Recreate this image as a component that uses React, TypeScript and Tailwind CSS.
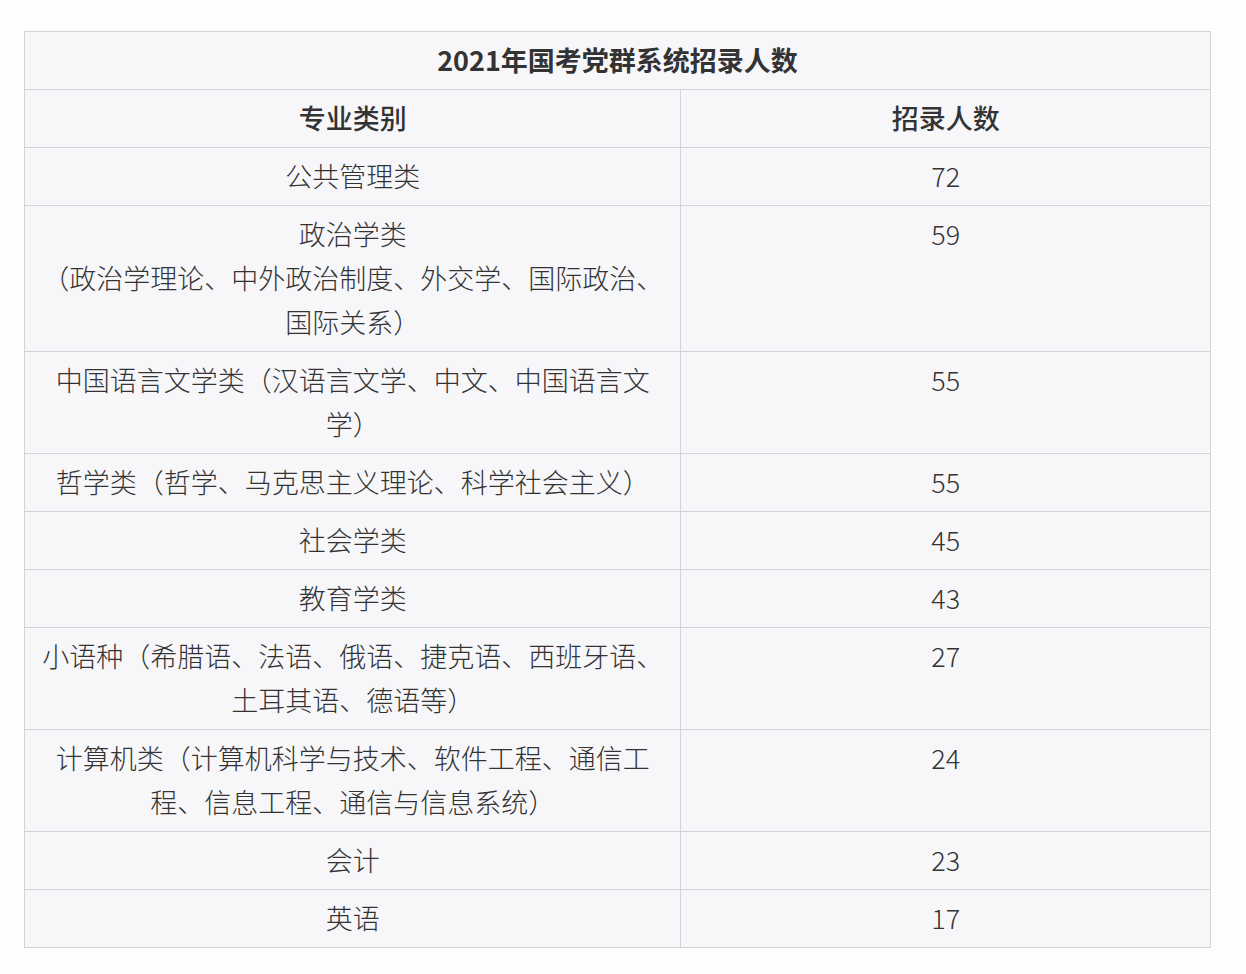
import React from "react";

const rows: [string, string][] = [
  ["公共管理类", "72"],
  ["政治学类\n（政治学理论、中外政治制度、外交学、国际政治、国际关系）", "59"],
  ["中国语言文学类（汉语言文学、中文、中国语言文学）", "55"],
  ["哲学类（哲学、马克思主义理论、科学社会主义）", "55"],
  ["社会学类", "45"],
  ["教育学类", "43"],
  ["小语种（希腊语、法语、俄语、捷克语、西班牙语、土耳其语、德语等）", "27"],
  ["计算机类（计算机科学与技术、软件工程、通信工程、信息工程、通信与信息系统）", "24"],
  ["会计", "23"],
  ["英语", "17"],
];

export default function App() {
  return (
    <div
      className="w-[1246px] h-[974px] bg-[#fdfdfe] pt-[31px] pl-[24px] text-[#333333]"
      style={{ fontFamily: '"Noto Sans CJK SC", "Noto Sans", sans-serif' }}
    >
      <table className="w-[1187px] border-collapse bg-[#f7f7fa] text-[27px] leading-[44px]">
        <colgroup>
          <col className="w-[657px]" />
          <col className="w-[530px]" />
        </colgroup>
        <tbody>
          <tr>
            <td colSpan={2} className="border border-[#d4d4d8] px-[15px] pt-[6px] pb-[7px] text-center align-top font-bold">
              2021年国考党群系统招录人数
            </td>
          </tr>
          <tr>
            <td className="border border-[#d4d4d8] px-[15px] pt-[6px] pb-[7px] text-center align-top font-medium">专业类别</td>
            <td className="border border-[#d4d4d8] px-[15px] pt-[6px] pb-[7px] text-center align-top font-medium">招录人数</td>
          </tr>
          {rows.map(([a, b], i) => (
            <tr key={i}>
              <td className="border border-[#d4d4d8] px-[15px] pt-[6px] pb-[7px] text-center align-top whitespace-pre-line font-light">{a}</td>
              <td className="border border-[#d4d4d8] px-[15px] pt-[6px] pb-[7px] text-center align-top font-light">{b}</td>
            </tr>
          ))}
        </tbody>
      </table>
    </div>
  );
}
